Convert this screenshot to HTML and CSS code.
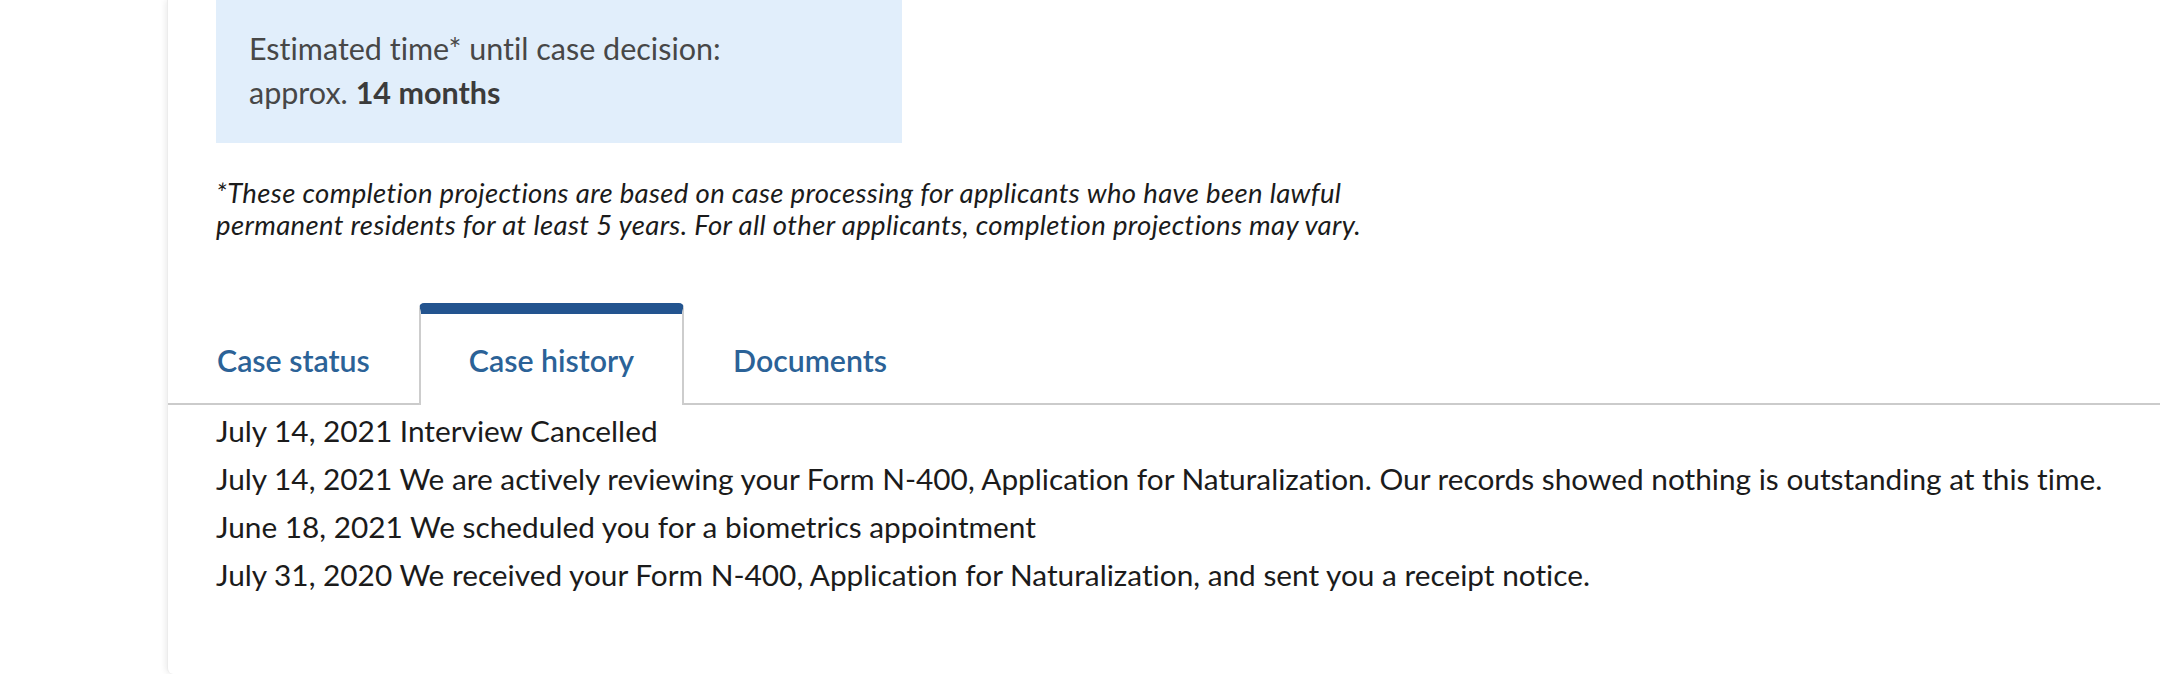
FILE: index.html
```html
<!DOCTYPE html>
<html lang="en">
<head>
<meta charset="utf-8">
<title>Case history</title>
<link rel="stylesheet" href="styles.css">
</head>
<body>
<div class="page">
  <main class="card">
    <div class="content">
      <div class="estimate">
        <p class="estimate-label">Estimated time* until case decision:</p>
        <p class="estimate-value">approx. <strong>14 months</strong></p>
      </div>
      <p class="note">*These completion projections are based on case processing for applicants who have been lawful<br>permanent residents for at least 5 years. For all other applicants, completion projections may vary.</p>
    </div>
    <nav class="tabs">
      <a class="tab">Case status</a>
      <a class="tab tab-active">Case history</a>
      <a class="tab">Documents</a>
    </nav>
    <ul class="history">
      <li>July 14, 2021 Interview Cancelled</li>
      <li>July 14, 2021 We are actively reviewing your Form N-400, Application for Naturalization. Our records showed nothing is outstanding at this time.</li>
      <li>June 18, 2021 We scheduled you for a biometrics appointment</li>
      <li>July 31, 2020 We received your Form N-400, Application for Naturalization, and sent you a receipt notice.</li>
    </ul>
  </main>
</div>
</body>
</html>
```
FILE: styles.css
```css
* { box-sizing: border-box; }

html, body {
  margin: 0;
  padding: 0;
  background: #ffffff;
}

body {
  font-family: Lato, "Source Sans Pro", "Liberation Sans", sans-serif;
  font-variant-ligatures: none;
  color: #1b1b1b;
  overflow: hidden;
}

.page {
  padding-left: 167px;
  height: 674px;
}

.card {
  height: 674px;
  background: #ffffff;
  box-shadow: -1px 0 6px rgba(0, 0, 0, 0.09);
  border-left: 1px solid #ececec;
  border-bottom-left-radius: 6px;
}

.content {
  padding-left: 48px;
}

.estimate {
  width: 686px;
  height: 143px;
  background: #e1eefb;
  padding: 26px 0 0 33px;
  color: #474747;
  font-size: 30.5px;
  line-height: 44px;
}

.estimate p {
  margin: 0;
}

.estimate strong {
  font-weight: 700;
  color: #3b3b3b;
}

.note {
  margin: 34px 0 0 0;
  font-style: italic;
  font-size: 27.5px;
  letter-spacing: 0.35px;
  line-height: 32px;
  color: #1b1b1b;
}

.tabs {
  display: flex;
  margin-top: 62px;
  border-bottom: 2px solid #cbcbcb;
  height: 102px;
}

.tab {
  display: block;
  padding: 26px 49px 0 49px;
  font-size: 30.3px;
  font-weight: 600;
  line-height: 40px;
  color: #2b6297;
  border-top: 11px solid transparent;
}

.tab-active {
  border-top-color: #23548f;
  border-radius: 5px 5px 0 0;
  border-left: 2px solid #cdcdcd;
  border-right: 2px solid #cdcdcd;
  background: #ffffff;
  margin-bottom: -2px;
  padding-left: 48px;
  padding-right: 48px;
}

.history {
  list-style: none;
  margin: 0;
  padding: 2px 0 0 48px;
  font-size: 29.8px;
  line-height: 48px;
  color: #1b1b1b;
}

.history li {
  margin: 0;
  white-space: nowrap;
}
```
